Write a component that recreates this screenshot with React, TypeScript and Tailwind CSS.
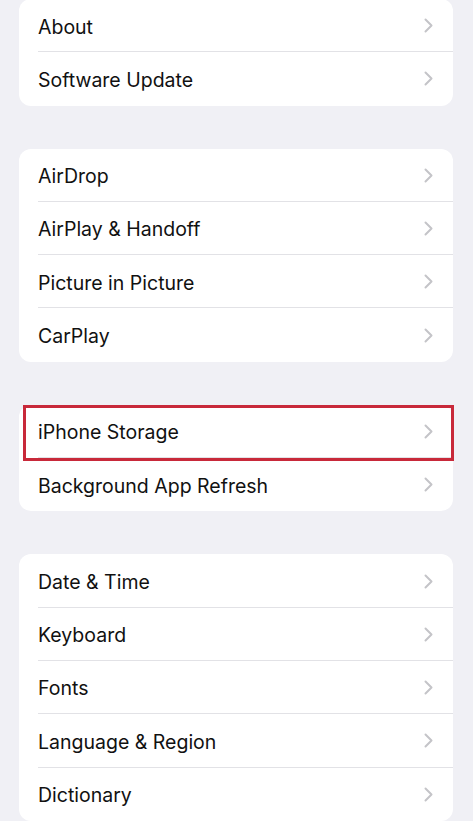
import React from "react";

const groups: string[][] = [
  ["About", "Software Update"],
  ["AirDrop", "AirPlay & Handoff", "Picture in Picture", "CarPlay"],
  ["iPhone Storage", "Background App Refresh"],
  ["Date & Time", "Keyboard", "Fonts", "Language & Region", "Dictionary"],
];

function Chevron() {
  return (
    <svg width="9" height="15" viewBox="0 0 9 15" fill="none" className="shrink-0">
      <path d="M1.5 1.5 L7.5 7.5 L1.5 13.5" stroke="#c4c4c8" strokeWidth="2" strokeLinecap="round" strokeLinejoin="round" />
    </svg>
  );
}

export default function App() {
  return (
    <div
      className="w-[473px] h-[821px] overflow-hidden bg-[#f0f0f5] pl-[19px] pr-[20px] flex flex-col gap-[43px]"
      style={{ fontFamily: "Inter, 'Liberation Sans', sans-serif" }}
    >
      {groups.map((items, gi) => (
        <div key={gi} className={`relative bg-white rounded-[12px] ${gi === 0 ? "-mt-[1px]" : ""}`}>
          {items.map((label, i) => (
            <div key={label} className="relative h-[53.3px] flex items-center pl-[19px] pr-[20px]">
              <span className="flex-1 pt-[3px] text-[19.5px] text-[#111111]">{label}</span>
              <Chevron />
              {i < items.length - 1 && (
                <div className="absolute left-[19px] right-0 bottom-0 h-px bg-[#e2e2e6]" />
              )}
            </div>
          ))}
          {gi === 2 && (
            <div className="absolute left-[4px] -right-[1px] top-0 h-[56px] border-[3px] border-[#c8293a] pointer-events-none" />
          )}
        </div>
      ))}
    </div>
  );
}
